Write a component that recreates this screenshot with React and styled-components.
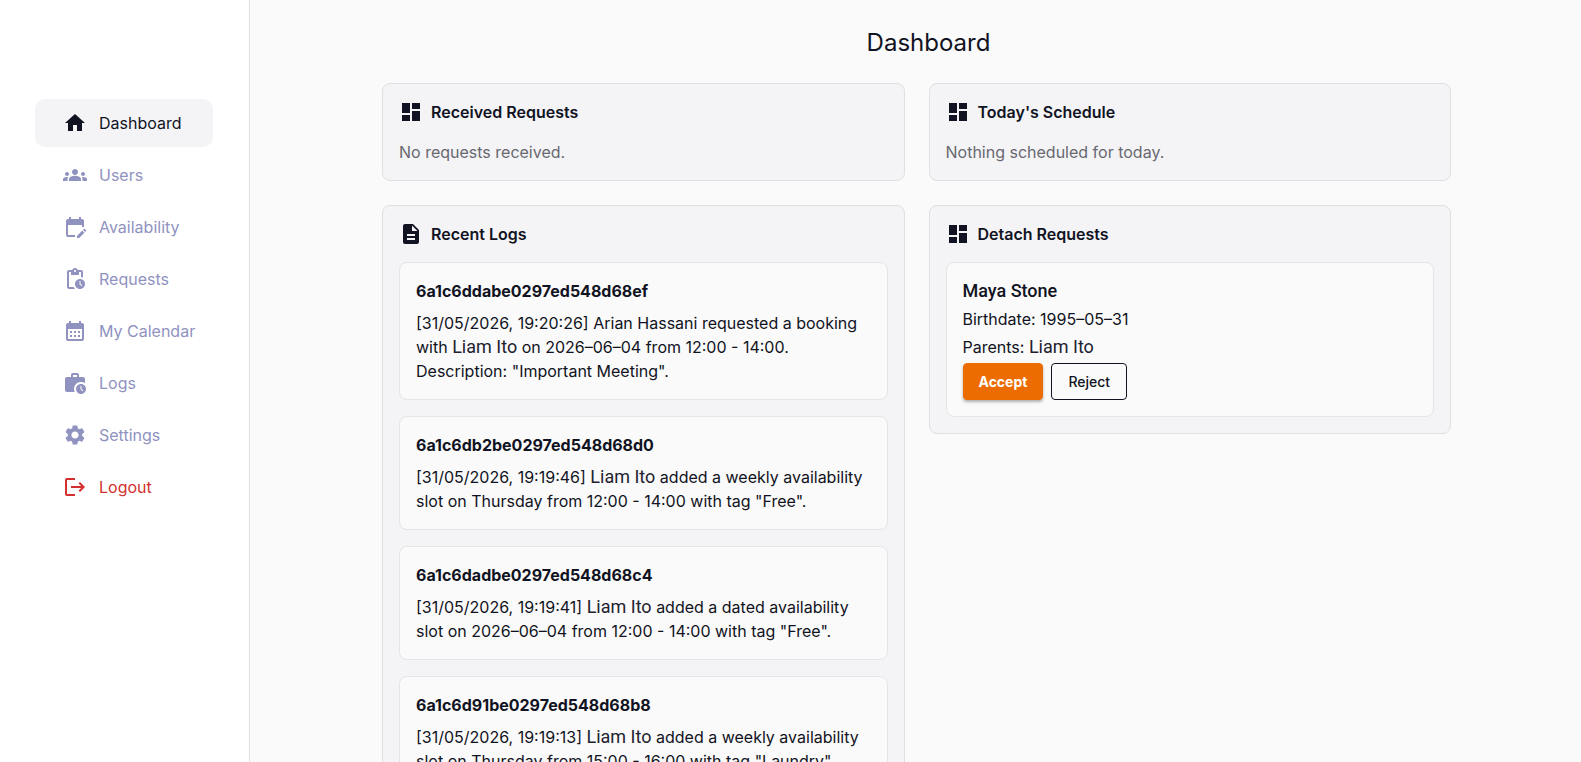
import {
  MdHome,
  MdGroups,
  MdEditCalendar,
  MdPendingActions,
  MdCalendarMonth,
  MdWorkHistory,
  MdSettings,
  MdLogout,
  MdDashboard,
  MdDescription,
} from "react-icons/md";
import styled, { createGlobalStyle } from "styled-components";

const GlobalStyle = createGlobalStyle`
    * {
        box-sizing: border-box;
    }
    body {
        margin: 0;
        background-color: #fafafa;
        color: #111322;
        font-family: "Inter", "Open Sans", sans-serif;
        font-size: 16px;
        line-height: 24px;
    }
    h1, h2, h3, p, ul {
        margin: 0;
        padding: 0;
    }
`;

const Container = styled.div`
    display: flex;
    height: 100vh;
`;

const Sidebar = styled.aside`
    flex: 0 0 250px;
    padding: 99px 36px 24px 35px;
    background-color: white;
    border-right: 1px solid #e0e0e0;
`;

const Menu = styled.ul`
    display: flex;
    flex-direction: column;
    gap: 4px;
    list-style: none;
`;

const MenuLink = styled.a`
    display: flex;
    align-items: center;
    gap: 12px;
    height: 48px;
    padding-left: 28px;
    border-radius: 10px;
    text-decoration: none;
    white-space: nowrap;
    color: ${(props) => props.$color || "#9092bf"};
    background-color: ${(props) => (props.$active ? "#f4f4f7" : "transparent")};
`;

const Main = styled.main`
    flex: 1;
    min-width: 0;
    padding: 25px 130px 24px 132px;
    overflow-y: auto;
    scrollbar-width: none;
`;

const Title = styled.h1`
    padding-left: 24px;
    margin-bottom: 22px;
    font-size: 24px;
    font-weight: 400;
    line-height: 36px;
    text-align: center;
`;

const Grid = styled.div`
    display: grid;
    grid-template-columns: 1fr 1fr;
    align-items: start;
    gap: 24px;
`;

const Card = styled.section`
    padding: 16px;
    border: 1px solid #e0e0e3;
    border-radius: 8px;
    background-color: #f4f4f7;
`;

const CardHeader = styled.div`
    display: flex;
    align-items: center;
    gap: 8px;
    margin-bottom: 16px;
`;

const CardTitle = styled.h2`
    font-size: 16px;
    font-weight: 600;
`;

const Empty = styled.p`
    color: #68686f;
`;

const List = styled.div`
    display: flex;
    flex-direction: column;
    gap: 16px;
`;

const Item = styled.article`
    padding: 16px;
    border: 1px solid #e5e5e7;
    border-radius: 8px;
    background-color: #fafafa;
`;

const LogId = styled.h3`
    margin-bottom: 8px;
    font-size: 16px;
    font-weight: 700;
`;

const Name = styled.span`
    font-family: "Roboto", sans-serif;
    font-size: 18px;
    line-height: 20px;
    color: #22222f;
`;

const Person = styled.h3`
    font-family: "Roboto", sans-serif;
    font-size: 18px;
    font-weight: 500;
    line-height: 24px;
`;

const Request = styled.div`
    display: flex;
    flex-direction: column;
    gap: 4px;
`;

const Actions = styled.div`
    display: flex;
    gap: 8px;
`;

const Button = styled.button`
    height: 37px;
    padding: 0 16px;
    border: 1px solid #111322;
    border-radius: 4px;
    background-color: transparent;
    color: #111322;
    font-family: inherit;
    font-size: 14px;
    font-weight: 500;
    cursor: pointer;
`;

const AcceptButton = styled(Button)`
    padding: 0 15px;
    border-color: #ed6c02;
    background-color: #ed6c02;
    color: white;
    font-weight: 700;
    box-shadow: 0 2px 3px rgba(0, 0, 0, 0.3);
`;

const menu = [
  { label: "Dashboard", icon: MdHome, color: "#111322", active: true },
  { label: "Users", icon: MdGroups },
  { label: "Availability", icon: MdEditCalendar },
  { label: "Requests", icon: MdPendingActions },
  { label: "My Calendar", icon: MdCalendarMonth },
  { label: "Logs", icon: MdWorkHistory },
  { label: "Settings", icon: MdSettings },
  { label: "Logout", icon: MdLogout, color: "#d32f2f" },
];

const logs = [
  {
    id: "6a1c6ddabe0297ed548d68ef",
    before: "[31/05/2026, 19:20:26] Arian Hassani requested a booking with",
    after: 'on 2026–06–04 from 12:00 - 14:00. Description: "Important Meeting".',
  },
  {
    id: "6a1c6db2be0297ed548d68d0",
    before: "[31/05/2026, 19:19:46]",
    after: 'added a weekly availability slot on Thursday from 12:00 - 14:00 with tag "Free".',
  },
  {
    id: "6a1c6dadbe0297ed548d68c4",
    before: "[31/05/2026, 19:19:41]",
    after: 'added a dated availability slot on 2026–06–04 from 12:00 - 14:00 with tag "Free".',
  },
  {
    id: "6a1c6d91be0297ed548d68b8",
    before: "[31/05/2026, 19:19:13]",
    after: 'added a weekly availability slot on Thursday from 15:00 - 16:00 with tag "Laundry".',
  },
];

const Panel = ({ title, icon: Icon, children }) => {
  return (
    <Card>
      <CardHeader>
        <Icon size={24} />
        <CardTitle>{title}</CardTitle>
      </CardHeader>
      {children}
    </Card>
  );
};

const App = () => {
  return (
    <Container>
      <GlobalStyle />
      <Sidebar>
        <nav>
          <Menu>
            {menu.map(({ label, icon: Icon, color, active }) => (
              <li key={label}>
                <MenuLink href="#" $color={color} $active={active}>
                  <Icon size={24} />
                  {label}
                </MenuLink>
              </li>
            ))}
          </Menu>
        </nav>
      </Sidebar>
      <Main>
        <Title>Dashboard</Title>
        <Grid>
          <Panel title="Received Requests" icon={MdDashboard}>
            <Empty>No requests received.</Empty>
          </Panel>
          <Panel title="Today's Schedule" icon={MdDashboard}>
            <Empty>Nothing scheduled for today.</Empty>
          </Panel>
          <Panel title="Recent Logs" icon={MdDescription}>
            <List>
              {logs.map((log) => (
                <Item key={log.id}>
                  <LogId>{log.id}</LogId>
                  <p>
                    {log.before} <Name>Liam Ito</Name> {log.after}
                  </p>
                </Item>
              ))}
            </List>
          </Panel>
          <Panel title="Detach Requests" icon={MdDashboard}>
            <Item>
              <Request>
                <Person>Maya Stone</Person>
                <p>Birthdate: 1995–05–31</p>
                <p>
                  Parents: <Name>Liam Ito</Name>
                </p>
                <Actions>
                  <AcceptButton type="button">Accept</AcceptButton>
                  <Button type="button">Reject</Button>
                </Actions>
              </Request>
            </Item>
          </Panel>
        </Grid>
      </Main>
    </Container>
  );
};

export default App;
